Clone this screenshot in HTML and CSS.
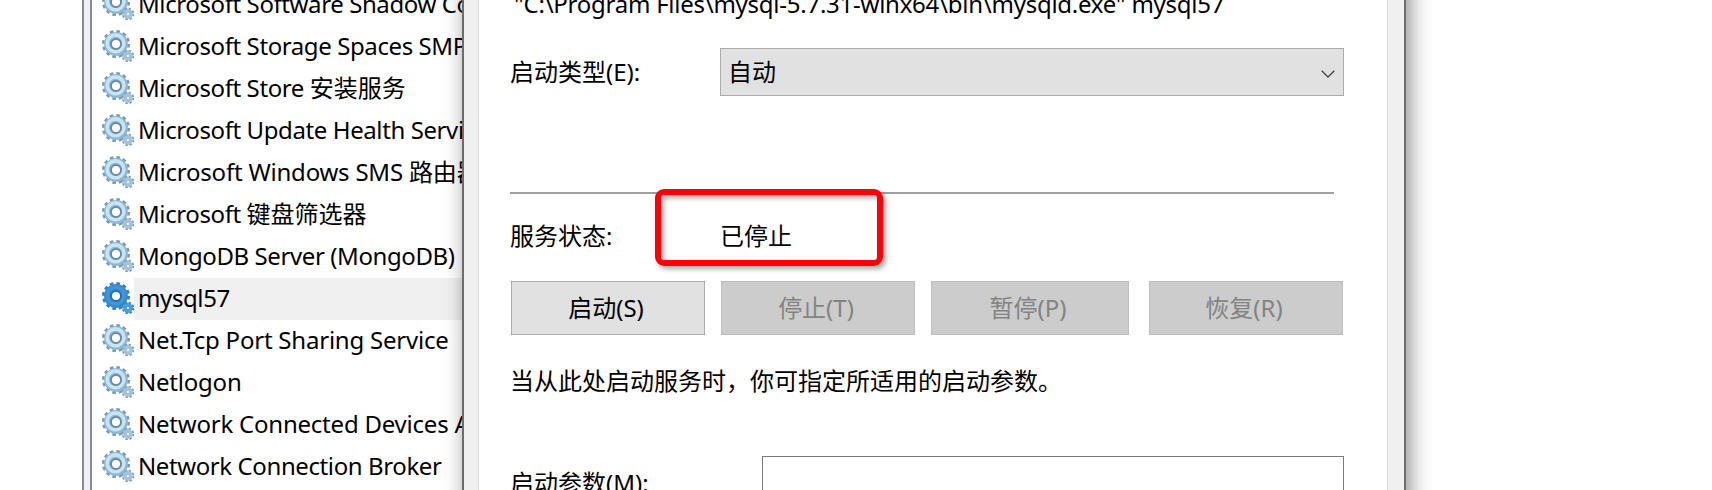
FILE: index.html
```
<!DOCTYPE html>
<html lang="zh-CN">
<head>
<meta charset="utf-8">
<title>服务</title>
<link rel="stylesheet" href="styles.css">
</head>
<body>
<svg class="defs" width="0" height="0">
  <defs>
    <symbol id="gear" viewBox="0 0 32 32">
      <circle class="teeth" cx="14" cy="14" r="12.1" stroke-width="3.8" stroke-dasharray="3.4 2.935"/>
      <circle class="ring" cx="14" cy="14" r="8.2" stroke-width="7.4"/>
      <circle class="shine" cx="13.5" cy="13.3" r="8.4" stroke-width="3.6"/>
      <circle class="rim" cx="14" cy="14" r="5" stroke-width="1.9"/>
      <circle class="teeth" cx="26" cy="26" r="5" stroke-width="2.4" stroke-dasharray="2.2 1.727"/>
      <circle class="small" cx="26" cy="26" r="3" stroke-width="3.8"/>
    </symbol>
  </defs>
</svg>
<main class="screen">
  <section class="list">
    <div class="row"><svg class="icon"><use href="#gear"/></svg><span class="name">Microsoft Software Shadow Co</span></div>
    <div class="row"><svg class="icon"><use href="#gear"/></svg><span class="name">Microsoft Storage Spaces SMP</span></div>
    <div class="row"><svg class="icon"><use href="#gear"/></svg><span class="name">Microsoft Store <span class="cjk">安装服务</span></span></div>
    <div class="row"><svg class="icon"><use href="#gear"/></svg><span class="name">Microsoft Update Health Servi</span></div>
    <div class="row"><svg class="icon"><use href="#gear"/></svg><span class="name wide">Microsoft Windows SMS <span class="cjk">路由器</span></span></div>
    <div class="row"><svg class="icon"><use href="#gear"/></svg><span class="name">Microsoft <span class="cjk">键盘筛选器</span></span></div>
    <div class="row"><svg class="icon"><use href="#gear"/></svg><span class="name">MongoDB Server (MongoDB)</span></div>
    <div class="row selected"><svg class="icon"><use href="#gear"/></svg><span class="name">mysql57</span></div>
    <div class="row"><svg class="icon"><use href="#gear"/></svg><span class="name wide">Net.Tcp Port Sharing Service</span></div>
    <div class="row"><svg class="icon"><use href="#gear"/></svg><span class="name wide">Netlogon</span></div>
    <div class="row"><svg class="icon"><use href="#gear"/></svg><span class="name wide">Network Connected Devices A</span></div>
    <div class="row"><svg class="icon"><use href="#gear"/></svg><span class="name">Network Connection Broker</span></div>
  </section>
  <section class="dialog">
    <div class="page">
      <div class="path">"C:\Program Files\mysql-5.7.31-winx64\bin\mysqld.exe" mysql57</div>
      <div class="field">
        <span class="label">启动类型(E):</span>
        <div class="select"><span>自动</span><svg class="chevron" viewBox="0 0 14 8"><path d="M.7.7 7 7 13.3.7"/></svg></div>
      </div>
      <div class="rule"></div>
      <div class="status"><span class="label">服务状态:</span><span class="value">已停止<i class="mark"></i></span></div>
      <div class="buttons">
        <button>启动(S)</button>
        <button disabled>停止(T)</button>
        <button disabled>暂停(P)</button>
        <button disabled>恢复(R)</button>
      </div>
      <p class="hint">当从此处启动服务时，你可指定所适用的启动参数。</p>
      <div class="params"><span class="label">启动参数(M):</span><div class="input"></div></div>
    </div>
  </section>
</main>
</body>
</html>
```
FILE: styles.css
```
* { box-sizing: border-box; }
body {
  margin: 0;
  background: #fff;
  color: #000;
  font: 24px/42px "Noto Sans", "Noto Sans CJK SC", sans-serif;
}
.defs { display: block; }
.screen {
  display: flex;
  height: 490px;
  padding-left: 82px;
  overflow: hidden;
}

/* service list */
.list {
  width: 380px;
  border-left: 2px solid #83879a;
  background: linear-gradient(90deg, #f0f0f0 6px, #83879a 6px, #83879a 8px, #fff 8px);
  padding-left: 18px;
  overflow: hidden;
}
.list .row:first-child { margin-top: -16px; }
.row {
  --teeth: #7798b6;
  --ring: #8fb8d5;
  --shine: #c6e4f4;
  --rim: #7089a3;
  --small: #a3c4da;
  display: flex;
  height: 42px;
  padding-top: 4px;
  white-space: nowrap;
}
.selected {
  --teeth: #2a7fc8;
  --ring: #3589cd;
  --shine: #4294d5;
  --rim: #2372b4;
  --small: #4a9ddb;
}
.icon { flex: none; width: 32px; height: 32px; }
.name {
  flex: none;
  width: 328px;
  height: 42px;
  margin-top: -4px;
  padding-left: 4px;
  line-height: 40px;
  letter-spacing: -0.4px;
}
.wide { letter-spacing: -0.22px; }
.cjk { letter-spacing: 0; }
.selected .name { background: #f0f0f0; }
.teeth, .ring, .shine, .rim, .small { fill: none; }
.teeth { stroke: var(--teeth); }
.ring { stroke: var(--ring); }
.shine { stroke: var(--shine); }
.rim { stroke: var(--rim); }
.small { stroke: var(--small); }

/* properties dialog; reaches past the screen so that its shadow is even */
.dialog {
  position: relative;
  flex: none;
  display: flex;
  width: 944px;
  margin: -40px 0;
  padding: 0 16px 0 14px;
  border: solid #6d6d6d;
  border-width: 0 2px;
  background: #f0f0f0;
  box-shadow: 4px 0 20px rgba(0, 0, 0, .45);
}
.page {
  flex: 1;
  padding: 40px 43px 0 31px;
  border: solid #dadada;
  border-width: 0 1px;
  background: #fff;
}
.path {
  height: 48px;
  margin-top: -17px;
  margin-bottom: 1px;
  padding-left: 4px;
  white-space: nowrap;
  letter-spacing: -0.25px;
}
.field { display: flex; height: 64px; padding-top: 16px; line-height: 48px; }
.label { flex: none; width: 210px; }
.select {
  flex: 1;
  display: flex;
  justify-content: space-between;
  align-items: center;
  height: 48px;
  padding: 0 8px 0 7px;
  border: 1px solid #adadad;
  background: #e1e1e1;
}
.chevron { width: 14px; height: 8px; margin-top: 3px; }
.chevron path { fill: none; stroke: #444; stroke-width: 1.3; }
.rule { height: 2px; margin: 96px 10px 0 0; background: #a0a0a0; }
.status { display: flex; height: 87px; padding-top: 21px; }
.value { position: relative; }
.mark {
  position: absolute;
  left: -65px;
  top: -26px;
  width: 228px;
  height: 77px;
  border: 6px solid #fb0007;
  border-radius: 9px;
  box-shadow: 3px 3px 5px rgba(0, 0, 0, .35), inset 3px 3px 5px rgba(0, 0, 0, .35);
}
.buttons { display: flex; gap: 16px; padding-left: 1px; }
button {
  width: 194px;
  height: 54px;
  padding: 0 4px 0 0;
  border: 1px solid #adadad;
  background: #e1e1e1;
  color: #000;
  font: inherit;
}
button:nth-child(3) { width: 198px; margin-right: 4px; }
button:disabled { border-color: #bfbfbf; background: #ccc; color: #838383; }
.hint { margin: 25px 0 0; }
.params { display: flex; margin-top: 54px; line-height: 54px; }
.params .label { width: 252px; }
.input { flex: 1; height: 60px; border: 1px solid #7a7a7a; }
```
